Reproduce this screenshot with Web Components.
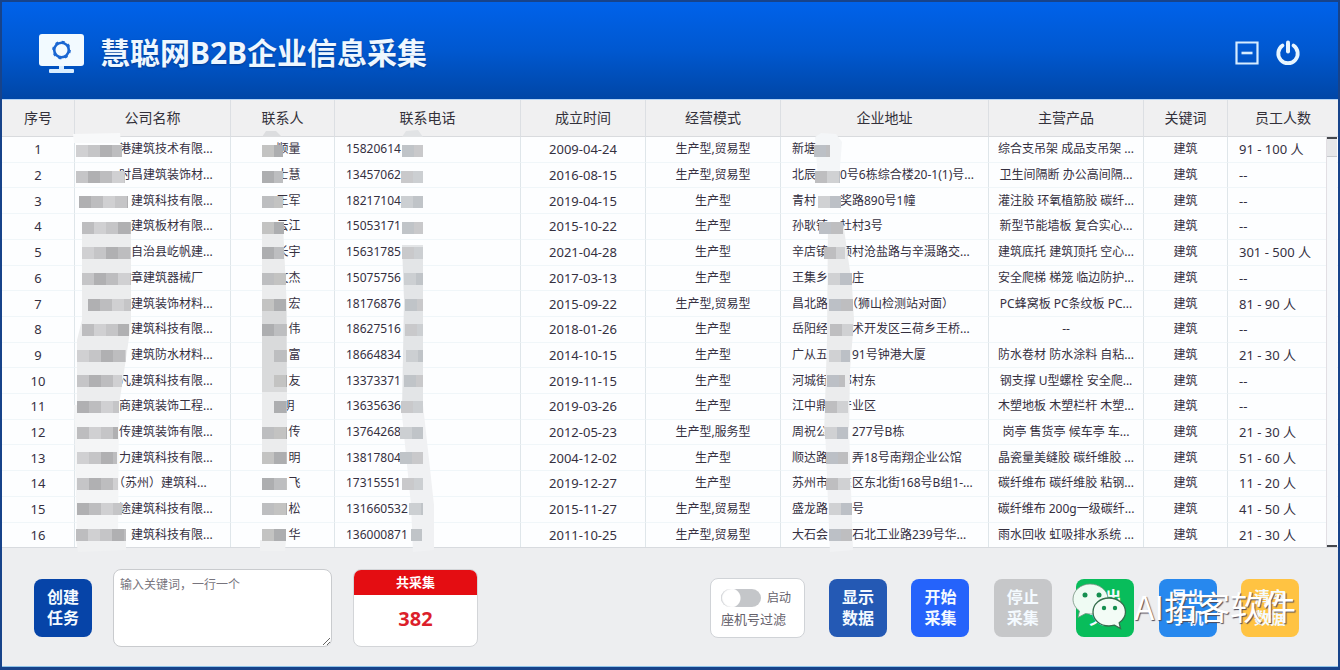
<!DOCTYPE html>
<html lang="zh-CN">
<head>
<meta charset="utf-8">
<title>慧聪网B2B企业信息采集</title>
<style>
  html, body { margin: 0; height: 100%; }
  body {
    font-family: "Noto Sans", "Noto Sans CJK SC", sans-serif;
    font-size: 12px;
    color: #35303f;
    background: #1c447f;
  }
</style>
</head>
<body>
<app-window></app-window>

<template id="app-window">
  <style>
    :host {
      display: flex;
      flex-direction: column;
      box-sizing: border-box;
      min-height: 100vh;
      border: solid #17438a;
      border-width: 2px 2px 3px;
      background: #edeef0;
    }
    company-grid { flex: 1; }
  </style>
  <title-bar>慧聪网B2B企业信息采集</title-bar>
  <company-grid></company-grid>
  <control-bar></control-bar>
</template>

<template id="title-bar">
  <style>
    :host {
      display: flex;
      align-items: center;
      gap: 16px;
      padding: 30px 37px 25px 36px;
      background: linear-gradient(#0062ea, #0058d0 50%, #0046a6);
      color: #eef7ff;
    }
    h1 { flex: 1; margin: 0; font-size: 30px; line-height: 36px; font-weight: 700; text-shadow: 0 1px 2px #003a8c; }
    svg { display: block; }
    button { padding: 0; border: 0; background: none; color: #d6ecff; }
  </style>
  <svg width="46" height="42" viewBox="0 0 46 42" aria-hidden="true">
    <rect x="1" y="2" width="45" height="32" rx="3" fill="#f2faff"/>
    <path d="M21 34h5v4h-5z" fill="#d9edff"/>
    <rect x="11" y="37" width="25" height="4" rx="1" fill="#d9edff"/>
    <circle cx="23.500" cy="18" r="7.300" fill="none" stroke="#1a66d2" stroke-width="2.600"/>
    <circle cx="23.500" cy="18" r="8.600" fill="none" stroke="#1a66d2" stroke-width="1.500" stroke-dasharray="3 3.750"/>
  </svg>
  <h1><slot></slot></h1>
  <button type="button" aria-label="最小化">
    <svg width="24" height="24" viewBox="0 0 24 24"><path d="M1.500 1.500h21v21h-21z" fill="none" stroke="currentColor" stroke-width="2.200"/><path d="M6.500 12h11" stroke="currentColor" stroke-width="2.600"/></svg>
  </button>
  <button type="button" aria-label="退出">
    <svg width="26" height="26" viewBox="0 0 26 26" fill="none" stroke="#e8f6ff" stroke-linecap="round"><path d="M7.500 5.500a9.700 9.700 0 1 0 11 0" stroke-width="3.800"/><path d="M13 2.500v9" stroke-width="4"/></svg>
  </button>
</template>

<template id="company-grid">
  <style>
    :host {
      display: grid;
      position: relative;
      background: #fdfeff;
      border-top: 1px solid #b5d4f5;
      border-bottom: 1px solid #d8dbdf;
    }
    table { width: 100%; height: 100%; border-collapse: separate; border-spacing: 0; table-layout: fixed; }
    th { height: 36px; padding: 0; background: #f0f0f1; border-bottom: 1px solid #d9dbde; border-right: 1px solid #dcdfe3; font-size: 14px; line-height: 20px; font-weight: 400; color: #33303a; }
    td { padding: 0; border-bottom: 1px solid #f0f6f9; border-right: 1px solid #dfe6ea; text-align: center; line-height: 18px; white-space: pre; overflow: hidden; }
    tr > :last-child { border-right: 0; }
    tbody tr:last-child td { border-bottom: 0; }
    .number, .date, .staff { font-size: 13px; }
    .company { text-align: left; padding-left: 8px; }
    .phone, .address, .staff { text-align: left; padding-left: 11px; }
    .number-col { width: 73px; } .company-col { width: 156px; } .contact-col { width: 104px; }
    .phone-col { width: 186px; } .date-col { width: 125px; } .mode-col { width: 135px; }
    .product-col { width: 155px; } .keyword-col { width: 84px; } .staff-col { width: 110px; }
    mosaic-mask { position: absolute; top: 0; left: 0; }
    .track { position: absolute; top: 37px; right: 1px; bottom: 0; width: 10px; box-sizing: border-box; border: solid #44474c; border-width: 2px 0; background: #f6f8fa; box-shadow: -1px 0 #e2dfe4; }
    .thumb { height: 17px; background: #e6e7e9; border-bottom: 1px solid #c6c9cd; }
  </style>
  <table>
    <colgroup><col class="number-col"><col class="company-col"><col class="contact-col"><col class="phone-col"><col class="date-col"><col class="mode-col"><col><col class="product-col"><col class="keyword-col"><col class="staff-col"></colgroup>
    <thead><tr><th scope="col">序号</th><th scope="col">公司名称</th><th scope="col">联系人</th><th scope="col">联系电话</th><th scope="col">成立时间</th><th scope="col">经营模式</th><th scope="col">企业地址</th><th scope="col">主营产品</th><th scope="col">关键词</th><th scope="col">员工人数</th></tr></thead>
    <tbody></tbody>
  </table>
  <mosaic-mask></mosaic-mask>
  <div class="track"><div class="thumb"></div></div>
</template>

<template id="mosaic-mask">
  <style>
    :host { display: block; pointer-events: none; }
    svg { display: block; overflow: visible; }
  </style>
  <svg width="900" height="450" viewBox="2 100 900 450" aria-hidden="true"></svg>
</template>

<template id="control-bar">
  <style>
    :host { display: flex; align-items: center; gap: 21px; padding: 21px 39px 19px 32px; position: relative; border-bottom: 1px solid #8fc3e8; }
    textarea { box-sizing: border-box; width: 219px; height: 78px; margin: 0; padding: 6px; border: 1px solid #c9cbce; border-radius: 8px; background: #fff; font: inherit; line-height: 18px; resize: both; }
    textarea::placeholder { color: #77747d; opacity: 1; }
    .right { display: flex; align-items: center; gap: 24px; margin-left: auto; }
    .actions { display: flex; justify-content: space-between; width: 470px; }
    water-mark { position: absolute; right: 42px; bottom: 36px; }
  </style>
  <action-button style="--fill:#0644a8">创建<br>任务</action-button>
  <textarea aria-label="关键词" placeholder="输入关键词，一行一个"></textarea>
  <count-card><span slot="label">共采集</span>382</count-card>
  <div class="right">
    <filter-switch></filter-switch>
    <div class="actions">
      <action-button style="--fill:#2459b4">显示<br>数据</action-button>
      <action-button style="--fill:#2563fb">开始<br>采集</action-button>
      <action-button style="--fill:#c6c7c9">停止<br>采集</action-button>
      <action-button style="--fill:#08bd5b">导出<br>文件</action-button>
      <action-button style="--fill:#2788ee">导出<br>手机</action-button>
      <action-button style="--fill:#ffc342">清空<br>数据</action-button>
    </div>
  </div>
  <water-mark>AI拓客软件</water-mark>
</template>

<template id="action-button">
  <style>
    :host { display: block; }
    button { display: block; width: 58px; height: 58px; padding: 0; border: 0; border-radius: 8px; background: var(--fill); color: #f4faff; font: inherit; font-size: 16px; font-weight: 700; line-height: 21px; }
  </style>
  <button type="button"><slot></slot></button>
</template>

<template id="count-card">
  <style>
    :host { display: flex; flex-direction: column; box-sizing: border-box; width: 125px; height: 78px; border: 1px solid #d3d5d8; border-radius: 8px; overflow: hidden; background: #fff; text-align: center; }
    .label { background: #e40d12; color: #fff; font-weight: 700; font-size: 13px; line-height: 25px; }
    .value { color: #dc1f2b; font-weight: 700; font-size: 20px; line-height: 48px; }
  </style>
  <div class="label"><slot name="label"></slot></div>
  <div class="value"><slot></slot></div>
</template>

<template id="filter-switch">
  <style>
    :host { display: block; box-sizing: border-box; width: 95px; padding: 8px 10px; border: 1px solid #d0d3d7; border-radius: 8px; background: #fff; color: #66626c; }
    label { display: grid; grid-template-columns: 40px 1fr; column-gap: 6px; align-items: center; line-height: 22px; }
    input { appearance: none; width: 40px; height: 18px; margin: 0; border-radius: 9px; background: radial-gradient(circle at 10px 50%, #fff 9px, #c4c6c9 10px); box-shadow: inset 1px 0 1px #d5d7da; }
    .name { grid-column: 1 / 3; font-size: 13px; line-height: 20px; margin: 0; }
  </style>
  <label><input type="checkbox" role="switch"><span>启动</span><span class="name">座机号过滤</span></label>
</template>

<template id="water-mark">
  <style>
    :host { display: flex; align-items: center; gap: 7px; font: 400 33px/48px "Noto Sans CJK SC", sans-serif; color: #fff; text-shadow: 1px 1px 1px #514a55; pointer-events: none; white-space: nowrap; }
    svg { display: block; overflow: visible; }
  </style>
  <svg width="54" height="48" viewBox="0 0 54 48" aria-hidden="true">
    <path d="M17 2C8 2 0 8.500 0 17c0 5 2.500 9 6.500 12L5 35.500l7.500-4C27 34.500 35 26 35 17S26 2 17 2z" fill="#effbf3" stroke="#75917f" stroke-width=".8"/>
    <path d="M36 16c-9 0-16 6-16 14s7 14 16 14c2 0 3.500-.3 5.500-.8l6 3.300-1.300-5.700C50 38 52.500 34.500 52.500 30c0-8-7.500-14-16.500-14z" fill="#f3fcf6" stroke="#356d4c" stroke-width="1.300"/>
    <g fill="#168f50"><circle cx="12" cy="13" r="2.500"/><circle cx="26" cy="13" r="2.500"/><circle cx="31" cy="26" r="2.200"/><circle cx="42" cy="26" r="2.200"/></g>
  </svg>
  <span><slot></slot></span>
</template>

<script>
  class TemplateElement extends HTMLElement {
    constructor() {
      super();
      this.attachShadow({ mode: 'open' })
        .append(document.getElementById(this.localName).content.cloneNode(true));
    }
  }

  const FIELDS = ['number', 'company', 'contact', 'phone', 'date', 'mode', 'address', 'product', 'keyword', 'staff'];

  // Hidden characters are stored as ideographic spaces.
  const COMPANIES = [
    ['　　　港建筑技术有限...', '　顺量', '15820614', '2009-04-24', '生产型,贸易型', '新塘', '综合支吊架 成品支吊架 ...', '91 - 100 人'],
    ['　　　时昌建筑装饰材...', '　士慧', '13457062', '2016-08-15', '生产型,贸易型', '北辰　　0号6栋综合楼20-1(1)号...', '卫生间隔断 办公高间隔...', '--'],
    ['　　　　建筑科技有限...', '　王军', '18217104', '2019-04-15', '生产型', '青村　　奖路890号1幢', '灌注胶 环氧植筋胶 碳纤...', '--'],
    ['　　　　建筑板材有限...', '　云江', '15053171', '2015-10-22', '生产型', '孙耿镇　杜村3号', '新型节能墙板 复合实心...', '--'],
    ['　　　　自治县屹帆建...', '　长宇', '15631785', '2021-04-28', '生产型', '辛店镇　顶村沧盐路与辛滠路交...', '建筑底托 建筑顶托 空心...', '301 - 500 人'],
    ['　　　　章建筑器械厂', '　文杰', '15075756', '2017-03-13', '生产型', '王集乡　　庄', '安全爬梯 梯笼 临边防护...', '--'],
    ['　　　　建筑装饰材料...', '　　宏', '18176876', '2015-09-22', '生产型,贸易型', '昌北路　　（狮山检测站对面）', 'PC蜂窝板 PC条纹板 PC...', '81 - 90 人'],
    ['　　　　建筑科技有限...', '　　伟', '18627516', '2018-01-26', '生产型', '岳阳经　　术开发区三荷乡王桥...', '--', '--'],
    ['　　　　建筑防水材料...', '　　富', '18664834', '2014-10-15', '生产型', '广从五　　91号钟港大厦', '防水卷材 防水涂料 自粘...', '21 - 30 人'],
    ['　　　凡建筑科技有限...', '　　友', '13373371', '2019-11-15', '生产型', '河城街　邓村东', '钢支撑 U型螺栓 安全爬...', '--'],
    ['　　　商建筑装饰工程...', '　明', '13635636', '2019-03-26', '生产型', '江中鼎　产业区', '木塑地板 木塑栏杆 木塑...', '--'],
    ['　　　传建筑装饰有限...', '　　传', '13764268', '2012-05-23', '生产型,服务型', '周祝公　　277号B栋', '岗亭 售货亭 候车亭 车...', '21 - 30 人'],
    ['　　　力建筑科技有限...', '　　明', '13817804', '2004-12-02', '生产型', '顺达路　　弄18号南翔企业公馆', '晶瓷量美缝胶 碳纤维胶 ...', '51 - 60 人'],
    ['　　　（苏州）建筑科...', '　　飞', '17315551', '2019-12-27', '生产型', '苏州市　东区东北街168号B组1-...', '碳纤维布 碳纤维胶 粘钢...', '11 - 20 人'],
    ['　　　途建筑科技有限...', '　　松', '131660532', '2015-11-27', '生产型,贸易型', '盛龙路　　号', '碳纤维布 200g一级碳纤...', '41 - 50 人'],
    ['　　　　建筑科技有限...', '　　华', '136000871', '2011-10-25', '生产型,贸易型', '大石会　　石北工业路239号华...', '雨水回收 虹吸排水系统 ...', '21 - 30 人'],
  ];

  class CompanyGrid extends TemplateElement {
    constructor() {
      super();
      const body = this.shadowRoot.querySelector('tbody');
      COMPANIES.forEach((company, index) => {
        const row = body.insertRow();
        const values = [index + 1, ...company.slice(0, 7), '建筑', company[7]];
        values.forEach((value, column) => {
          const cell = row.insertCell();
          cell.className = FIELDS[column];
          cell.textContent = value;
        });
      });
    }
  }

  // For every masked column: faint trails drawn as polygons, then the [from, to] span of each row's tiles.
  const MASKS = [
    {
      trails: [['#f8f9fa', '73,134 120,133 121,143 74,143'], ['#ecedee', '82,232 131,232 131,322 128,345 119,405 118,428 77,428 77,340 82,320'], ['#f4f5f6', '74,405 119,405 118,540 77,540'], ['#f0f1f2', '76,540 126,540 126,550 78,552']],
      spans: [[76,122],[76,125],[79,128],[82,131],[82,131],[82,131],[88,131],[82,129],[77,126],[77,122],[77,119],[77,118],[77,117],[77,118],[77,122],[76,126]],
      dark: ['#d0d0d2', '#c5c5c7', '#b0b0b2', '#bdbdbf']
    },
    {
      trails: [['#dcdddf', '262,137 266,131 276,131 282,137'], ['#ebeced', '262,225 283,225 287,310 287,405 287,455 262,455'], ['#d9dadb', '262,300 286,300 287,392 262,392'], ['#f0f1f2', '260,540 286,540 285,551 260,551']],
      spans: [[262,283],[262,283],[262,283],[262,284],[262,284],[262,286],[262,286],[262,287],[274,287],[274,287],[274,287],[262,287],[262,287],[262,287],[262,287],[262,286]],
      dark: ['#c3c3c2', '#adaeb0', '#bdbec0']
    },
    {
      trails: [['#e1e3e5', '402,137 406,131 418,130 423,137'], ['#e3e5e7', '402,245 423,245 423,410 402,410 404,300'], ['#f0f1f3', '401,405 423,405 434,505 434,550 413,552 411,505']],
      spans: [[402,423],[401,423],[401,423],[402,423],[402,423],[404,423],[405,423],[405,423],[406,423],[404,423],[401,423],[400,423],[400,423],[402,423],[409,423],[411,422]],
      dark: ['#c0c4c8', '#c9c9cb', '#cccfd2']
    },
    {
      trails: [['#f4f6f8', '815,137 821,133 836,134 842,142 839,180 818,180'], ['#ebeced', '828,222 843,222 852,285 854,320 850,370 849,435 824,435 827,340'], ['#f1f2f4', '825,428 849,428 853,550 830,552']],
      spans: [[814,830],[815,840],[818,841],[819,843],[824,845],[828,852],[829,853],[830,853],[829,850],[827,845],[825,848],[825,848],[826,848],[826,850],[829,852],[829,852]],
      dark: ['#bcc0c6', '#bebec0', '#d0d1d3']
    }
  ];

  class MosaicMask extends TemplateElement {
    constructor() {
      super();
      const svg = this.shadowRoot.querySelector('svg');
      const draw = (name, attributes) => {
        const shape = document.createElementNS('http://www.w3.org/2000/svg', name);
        for (const key in attributes) shape.setAttribute(key, attributes[key]);
        svg.append(shape);
      };
      for (const { trails, spans, dark } of MASKS) {
        for (const [fill, points] of trails) draw('polygon', { fill, points });
        spans.forEach(([from, to], row) => {
          const y = Math.round(145 + row * 25.6);
          for (let x = from, tile = row; x < to; x += 12, tile++) {
            draw('rect', { x, y, width: Math.min(12, to - x), height: 12, fill: dark[tile % dark.length] });
          }
        });
      }
    }
  }

  customElements.define('mosaic-mask', MosaicMask);
  customElements.define('action-button', class extends TemplateElement {});
  customElements.define('count-card', class extends TemplateElement {});
  customElements.define('filter-switch', class extends TemplateElement {});
  customElements.define('water-mark', class extends TemplateElement {});
  customElements.define('title-bar', class extends TemplateElement {});
  customElements.define('company-grid', CompanyGrid);
  customElements.define('control-bar', class extends TemplateElement {});
  customElements.define('app-window', class extends TemplateElement {});
</script>
</body>
</html>
